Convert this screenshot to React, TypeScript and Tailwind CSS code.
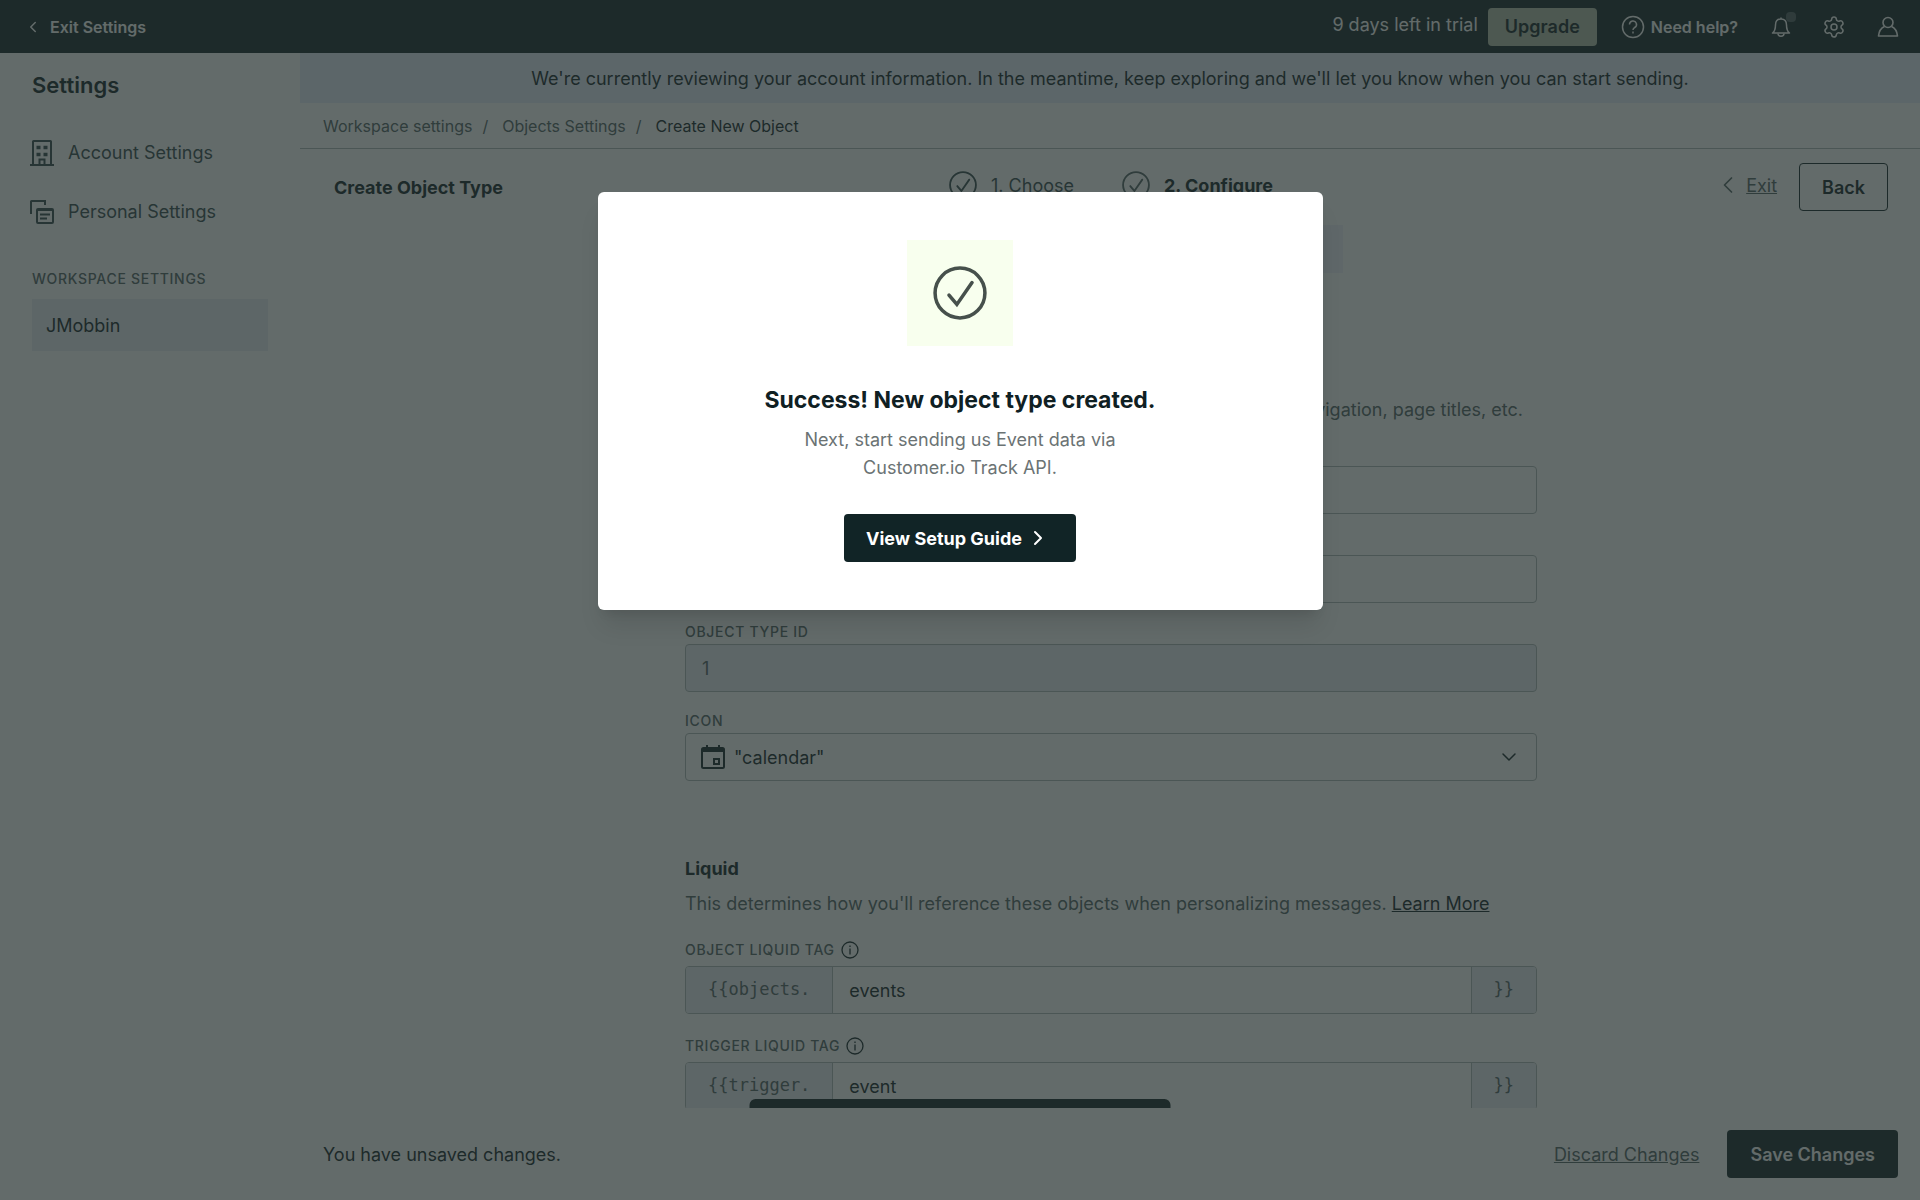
import React from 'react';
import { ChevronDown, ChevronLeft, ChevronRight, Settings } from 'lucide-react';

const SETTINGS_LINKS = [
  { label: 'Account Settings', Icon: BuildingIcon },
  { label: 'Personal Settings', Icon: CardsIcon },
];

const LIQUID_TAGS = [
  { id: 'object-tag', label: 'Object Liquid Tag', prefix: '{{objects.', value: 'events' },
  { id: 'trigger-tag', label: 'Trigger Liquid Tag', prefix: '{{trigger.', value: 'event' },
];

const LABEL = 'text-[14px] leading-5 font-medium uppercase tracking-wider text-[#4f6062]';
const FIELD = 'h-12 w-full rounded border border-[#adb6b6] text-[18px]';
const AFFIX = "flex items-center border-[#adb6b6] bg-[#eaecf5] px-[22px] font-['DejaVu_Sans_Mono',monospace] text-[17px] text-[#4f6062]";

function BuildingIcon() {
  return (
    <svg viewBox="0 0 24 28" className="h-7 w-6 shrink-0" fill="none" stroke="currentColor" strokeWidth="2">
      <path d="M3 26V2.500q0-.5.500-.5h17q.5 0 .5.500V26M0 26h24M9.500 26v-5.500h5V26" />
      <path d="M6.500 8.500h4M13.500 8.500h4M6.500 15.500h4M13.500 15.500h4" strokeWidth="3.600" />
    </svg>
  );
}

function CardsIcon() {
  return (
    <svg viewBox="0 0 24 24" className="h-6 w-6 shrink-0" fill="none" stroke="currentColor" strokeWidth="2">
      <path d="M1 14V1.500q0-.5.500-.5H15v4" />
      <rect x="7" y="9" width="16" height="14" rx="1" />
      <path d="M7 10h16M10 14.500h10M10 18.500h7" />
    </svg>
  );
}

function CheckCircle({ className }: { className: string }) {
  return (
    <svg viewBox="0 0 26 26" className={className} fill="none" stroke="currentColor" strokeWidth="1.700" strokeLinecap="round">
      <circle cx="13" cy="13" r="12" />
      <path d="M7.700 14l3.800 4.500L18.800 8" />
    </svg>
  );
}

function HelpIcon() {
  return (
    <svg viewBox="0 0 24 24" className="h-6 w-6" fill="none" stroke="currentColor" strokeWidth="1.500">
      <circle cx="12" cy="12" r="10.500" />
      <path d="M8.500 9.500a3.500 3.500 0 1 1 5.200 3c-1.200.7-1.700 1.200-1.700 2.500M12 16.500v2" />
    </svg>
  );
}

function BellIcon() {
  return (
    <svg viewBox="0 0 22 22" className="h-[22px] w-[22px]" fill="none" stroke="currentColor" strokeWidth="1.500" strokeLinejoin="round">
      <path d="M11 3C7.500 3 5.500 5.500 5.500 9c0 4-1 6.500-3 8h17c-2-1.500-3-4-3-8 0-3.500-2-6-5.500-6zM11 3V1.500" />
      <path d="M8 17.500c0 1.500 1.300 2.700 3 2.700s3-1.200 3-2.700" />
    </svg>
  );
}

function PersonIcon() {
  return (
    <svg viewBox="0 0 24 24" className="h-6 w-6" fill="none" stroke="currentColor" strokeWidth="1.600" strokeLinejoin="round">
      <circle cx="12" cy="7.500" r="5" />
      <path d="M8.500 11.500C5 13 3 16 2.500 21h19c-.5-5-2.500-8-6-9.500" />
    </svg>
  );
}

function InfoIcon() {
  return (
    <svg viewBox="0 0 18 18" className="h-[18px] w-[18px]" fill="none" stroke="currentColor" strokeWidth="1.300">
      <circle cx="9" cy="9" r="8" />
      <path d="M9 7.500v6M9 4.500v1.500" />
    </svg>
  );
}

function CalendarIcon() {
  return (
    <svg viewBox="0 0 24 24" className="h-6 w-6" fill="none" stroke="currentColor" strokeWidth="2">
      <rect x="1" y="3" width="22" height="20" rx="1.500" />
      <path d="M1 5h22" strokeWidth="4" />
      <path d="M6 0v4M18 0v4" />
      <rect x="13" y="14" width="5" height="5" />
    </svg>
  );
}

function TopBar() {
  return (
    <header className="flex h-[53px] shrink-0 items-center justify-between bg-[#0f2023] pr-5 pl-6 text-white">
      <a href="#exit" className="flex items-center gap-2 text-[16px] font-semibold">
        <ChevronLeft className="h-[18px] w-[18px]" />
        Exit Settings
      </a>
      <div className="flex items-center">
        <span className="pb-1 text-[18px]">9 days left in trial</span>
        <button className="ml-2.5 h-[38px] rounded bg-[#b3bda8] px-[17px] text-[18px] font-semibold text-[#0f2023]">Upgrade</button>
        <button className="ml-6 flex items-center gap-1.5 text-[16px] font-semibold">
          <HelpIcon />
          Need help?
        </button>
        <button aria-label="Notifications" className="relative ml-8">
          <BellIcon />
          <span className="absolute -top-1 -right-1 h-[10px] w-[10px] rounded bg-[#4c5a5e]" />
        </button>
        <button aria-label="Settings" className="ml-[30px]">
          <Settings className="h-6 w-6" strokeWidth={1.5} />
        </button>
        <button aria-label="Profile" className="ml-[30px]">
          <PersonIcon />
        </button>
      </div>
    </header>
  );
}

function Sidebar() {
  return (
    <aside className="w-[300px] shrink-0 px-8 pt-4">
      <h2 className="text-[22px] leading-8 font-semibold">Settings</h2>
      <nav className="mt-[38px] flex flex-col gap-8 text-[#32474a]">
        {SETTINGS_LINKS.map(({ label, Icon }) => (
          <a key={label} href="#settings" className="-ml-0.5 flex h-[27px] items-center gap-3.5 text-[18px]">
            <Icon />
            {label}
          </a>
        ))}
      </nav>
      <h3 className={`mt-11 ${LABEL}`}>Workspace Settings</h3>
      <a href="#workspace" className="mt-2.5 flex h-[52px] items-center bg-[#eaecf5] px-3.5 text-[18px]">JMobbin</a>
    </aside>
  );
}

function ObjectForm() {
  return (
    <form className="mx-auto w-full max-w-[852px]">
      <h2 className="text-[18px] leading-7 font-bold">Naming</h2>
      <p className="mt-1 pr-3.5 text-right text-[18px] leading-7 text-[#4f6062]">Used in navigation, page titles, etc.</p>
      <label htmlFor="plural" className={`mt-5 block ${LABEL}`}>Name</label>
      <input id="plural" className={`mt-0.5 px-4 ${FIELD}`} />
      <label htmlFor="singular" className={`mt-[19px] block ${LABEL}`}>Singular name</label>
      <input id="singular" className={`mt-0.5 px-4 ${FIELD}`} />
      <label htmlFor="type-id" className={`mt-[19px] block ${LABEL}`}>Object Type ID</label>
      <input id="type-id" readOnly defaultValue="1" className={`mt-0.5 bg-[#eaecf5] px-4 text-[#4f6062] ${FIELD}`} />
      <label htmlFor="icon" className={`mt-[19px] block ${LABEL}`}>Icon</label>
      <div className="relative mt-0.5">
        <select id="icon" className={`appearance-none pr-12 pl-12 ${FIELD}`}>
          <option>"calendar"</option>
        </select>
        <span className="pointer-events-none absolute inset-y-0 left-4 flex items-center"><CalendarIcon /></span>
        <ChevronDown className="pointer-events-none absolute top-3 right-4 h-6 w-6" strokeWidth={1.5} />
      </div>

      <h2 className="mt-[74px] text-[18px] leading-7 font-bold">Liquid</h2>
      <p className="mt-[7px] text-[18px] leading-7 text-[#4f6062]">
        This determines how you'll reference these objects when personalizing messages.{' '}
        <a href="#learn" className="text-[#0f2023] underline">Learn More</a>
      </p>
      {LIQUID_TAGS.map(tag => (
        <div key={tag.id} className="mt-[22px]">
          <div className="flex items-center gap-1.5">
            <label htmlFor={tag.id} className={LABEL}>{tag.label}</label>
            <InfoIcon />
          </div>
          <div className="mt-1.5 flex h-12 overflow-hidden rounded border border-[#adb6b6] text-[18px]">
            <span className={`border-r ${AFFIX}`}>{tag.prefix}</span>
            <input id={tag.id} defaultValue={tag.value} className="min-w-0 flex-1 px-4" />
            <span className={`border-l ${AFFIX}`}>{'}}'}</span>
          </div>
        </div>
      ))}
    </form>
  );
}

function SuccessDialog() {
  return (
    <div role="dialog" aria-labelledby="dialog-title" className="flex w-[725px] flex-col items-center rounded-md bg-white py-12 text-center shadow-xl">
      <div className="flex h-[106px] w-[106px] items-center justify-center bg-[#f8ffee] text-[#46504b]">
        <CheckCircle className="h-[54px] w-[54px]" />
      </div>
      <h1 id="dialog-title" className="mt-9 text-[23px] leading-9 font-bold">Success! New object type created.</h1>
      <p className="mt-2 w-[340px] text-[18px] leading-7 text-[#6b7374]">Next, start sending us Event data via Customer.io Track API.</p>
      <button className="mt-8 flex h-12 items-center rounded bg-[#112426] pr-[26px] pl-[22px] text-[18px] font-bold text-white">
        View Setup Guide
        <ChevronRight className="ml-1 h-6 w-6" />
      </button>
    </div>
  );
}

export default function App() {
  return (
    <div className="relative flex h-screen flex-col overflow-hidden bg-white font-['Inter',sans-serif] text-[#0f2023]">
      <TopBar />
      <div className="flex min-h-0 flex-1">
        <Sidebar />
        <main className="flex min-w-0 flex-1 flex-col">
          <p className="flex h-[50px] shrink-0 items-center justify-center bg-[#e6edfb] text-[18px]">
            We're currently reviewing your account information. In the meantime, keep exploring and we'll let you know when you can start sending.
          </p>
          <nav className="flex h-[46px] shrink-0 items-center border-b border-[#adb6b6] px-[23px] text-[16px] text-[#4f6062]">
            <a href="#workspace">Workspace settings</a>
            <span className="mr-3.5 ml-2.5">/</span>
            <a href="#objects">Objects Settings</a>
            <span className="mr-3.5 ml-2.5">/</span>
            <span className="text-[#0f2023]">Create New Object</span>
          </nav>
          <div className="flex min-h-0 flex-1 flex-col overflow-hidden">
            <div className="grid h-[76px] shrink-0 grid-cols-3 items-center pr-8 pl-[34px] text-[18px]">
              <h1 className="font-bold">Create Object Type</h1>
              <ol className="flex items-center justify-center gap-12 pb-1">
                <li className="flex items-center gap-3.5 whitespace-nowrap text-[#32474a]">
                  <CheckCircle className="h-7 w-7" />
                  1. Choose
                </li>
                <li className="flex items-center gap-3.5 font-bold whitespace-nowrap">
                  <CheckCircle className="h-7 w-7 text-[#4f6062]" />
                  2. Configure
                </li>
              </ol>
              <div className="flex items-center justify-end gap-[22px]">
                <a href="#exit-type" className="flex items-center gap-1 pb-1 text-[#4f6062]">
                  <ChevronLeft className="h-7 w-7" strokeWidth={1.5} />
                  <span className="underline">Exit</span>
                </a>
                <button className="h-12 rounded border border-[#0f2023] px-[22px] font-semibold">Back</button>
              </div>
            </div>
            <div className="pr-8 pl-[34px]">
              {/* Notice strip under the steps */}
              <div className="mx-auto h-12 w-[464px] bg-[#f1f0fa]" />
              <div className="pt-[91px]">
                <ObjectForm />
              </div>
            </div>
          </div>
          <footer className="flex h-[92px] shrink-0 items-center justify-between bg-white pr-[22px] pl-[23px] text-[18px]">
            <span>You have unsaved changes.</span>
            <div className="flex items-center gap-7">
              <a href="#discard" className="text-[#4f6062] underline">Discard Changes</a>
              <button className="h-12 rounded bg-[#0f2023] px-[23px] font-semibold text-white">Save Changes</button>
            </div>
          </footer>
        </main>
      </div>

      {/* Toast sliding up from behind the footer */}
      <div className="absolute bottom-[92px] left-1/2 h-[9px] w-[421px] -translate-x-1/2 rounded-t-md bg-[#0f2023]" />

      <div className="absolute inset-0 flex items-start justify-center bg-[rgb(35_46_45/0.71)] pt-48">
        <SuccessDialog />
      </div>
    </div>
  );
}
